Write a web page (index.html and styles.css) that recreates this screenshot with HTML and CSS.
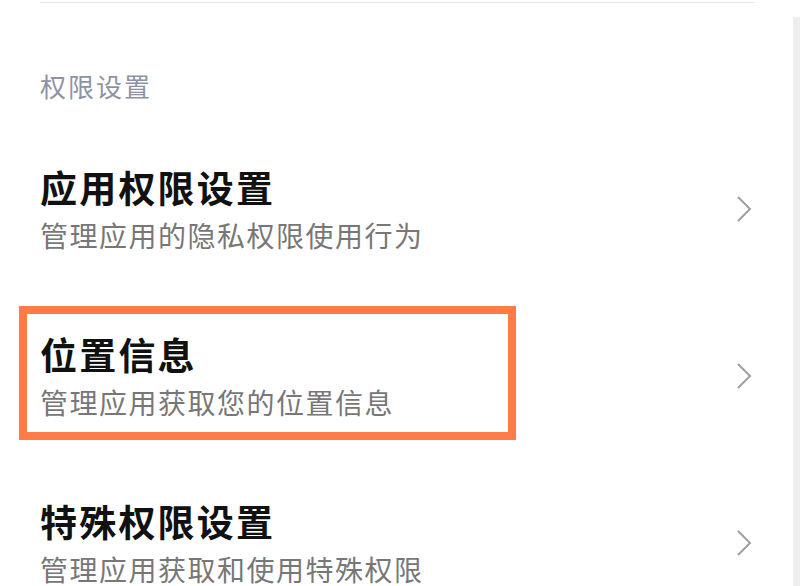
FILE: index.html
```html
<!DOCTYPE html>
<html lang="zh-CN">
<head>
<meta charset="UTF-8">
<meta name="viewport" content="width=device-width, initial-scale=1.0">
<title>权限设置</title>
<link rel="stylesheet" href="styles.css">
</head>
<body>

<div class="page">
  <div class="divider"></div>

  <div class="group-title">权限设置</div>

  <div class="item">
    <div class="item-text">
      <div class="item-title">应用权限设置</div>
      <div class="item-desc">管理应用的隐私权限使用行为</div>
    </div>
    <svg class="chevron" width="16" height="28" viewBox="0 0 16 28"><polyline points="2,2 14,14 2,26" /></svg>
  </div>

  <div class="item">
    <div class="item-text">
      <div class="item-title">位置信息</div>
      <div class="item-desc">管理应用获取您的位置信息</div>
    </div>
    <svg class="chevron" width="16" height="28" viewBox="0 0 16 28"><polyline points="2,2 14,14 2,26" /></svg>
    <div class="highlight"></div>
  </div>

  <div class="item">
    <div class="item-text">
      <div class="item-title">特殊权限设置</div>
      <div class="item-desc">管理应用获取和使用特殊权限</div>
    </div>
    <svg class="chevron" width="16" height="28" viewBox="0 0 16 28"><polyline points="2,2 14,14 2,26" /></svg>
  </div>

  <div class="scrollbar"></div>
</div>

</body>
</html>
```

FILE: styles.css
```css
/* Base page */
body {
  margin: 0;
  background-color: #fff;
  font-family: "Noto Sans CJK SC", "Noto Sans", sans-serif;
}

.page {
  position: relative;
  width: 800px;
  height: 586px;
  overflow: hidden;
}

/* Thin line left over from the section above */
.divider {
  margin: 2px 0 0 40px;
  width: 715px;
  height: 1px;
  background-color: #e6e6e6;
}

/* Group heading */
.group-title {
  padding: 0 40px;
  margin: 63px 0 19px;
  font-size: 26px;
  line-height: 40px;
  letter-spacing: 2px;
  color: #8e93a3;
}

/* List rows */
.item {
  position: relative;
  height: 167px;
  display: flex;
  align-items: center;
  padding: 0 48px 0 40px;
}

.item-text {
  flex: 1;
  display: flex;
  flex-direction: column;
  gap: 2px;
}

.item-title {
  font-size: 37px;
  line-height: 50px;
  font-weight: bold;
  letter-spacing: 2.2px;
  color: #111;
}

.item-desc {
  font-size: 28px;
  line-height: 42px;
  letter-spacing: 1.5px;
  color: #777;
}

.chevron polyline {
  fill: none;
  stroke: #a0a0a0;
  stroke-width: 2;
}

/* Orange annotation box drawn over the second row */
.highlight {
  position: absolute;
  left: 19px;
  top: 14px;
  width: 481px;
  height: 118px;
  border: 8px solid #ff7b47;
}

/* Scrollbar track on the right edge */
.scrollbar {
  position: absolute;
  right: 0;
  top: 17px;
  bottom: 0;
  width: 7px;
  background-color: #eeeeee;
}
```
